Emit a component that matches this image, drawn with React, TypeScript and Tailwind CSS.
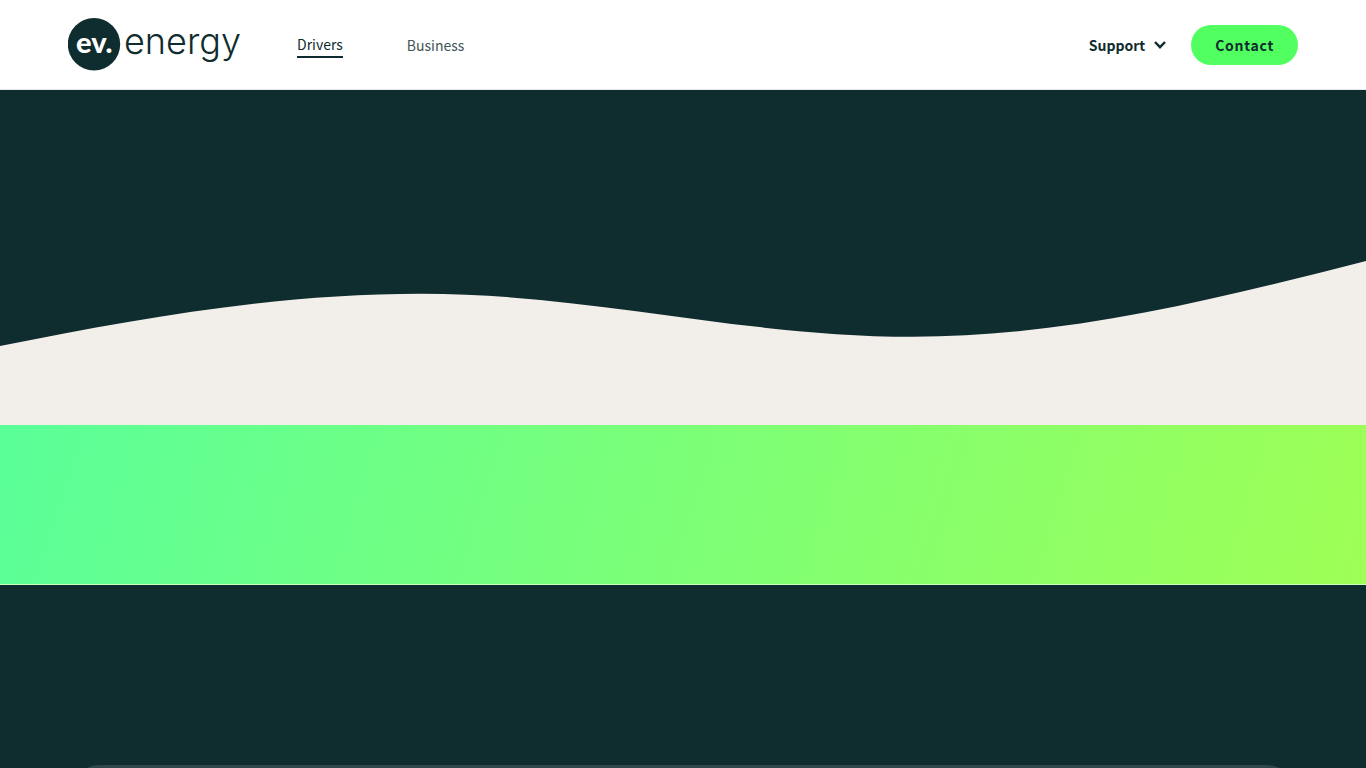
const navLinks = [
  { label: "Drivers", href: "#drivers", active: true },
  { label: "Business", href: "#business", active: false },
];

function Logo() {
  return (
    <a href="#home" aria-label="ev.energy" className="block">
      <svg className="block w-[180px] h-16" viewBox="0 -5 180 64" fill="#0f2c2e">
        <circle cx="26" cy="26.3" r="26.2" />
        <text x="8" y="35" fontFamily="Lato, sans-serif" fontSize="29" fontWeight="900" fill="#ffffff">
          ev.
        </text>
        <text x="56" y="36" fontFamily="Inter, sans-serif" fontSize="36" fontWeight="300">
          energy
        </text>
      </svg>
    </a>
  );
}

function Header() {
  return (
    <header className="h-[90px] px-[68px] flex items-center justify-between bg-white border-b border-gray-200">
      <div className="flex items-center">
        <Logo />
        <nav className="ml-[49px] flex items-center gap-16">
          {navLinks.map((link) => (
            <a
              key={link.label}
              href={link.href}
              className={
                link.active
                  ? "text-sm leading-6 border-b-2 border-[#0f2c2e]"
                  : "text-sm leading-6 text-[#3f5557]"
              }
            >
              {link.label}
            </a>
          ))}
        </nav>
      </div>

      <div className="flex items-center gap-6">
        <button type="button" className="flex items-center gap-2 text-sm font-bold">
          Support
          <svg className="w-3.5 h-2.5" viewBox="0 0 14 10" fill="none" stroke="currentColor" strokeWidth="2.4">
            <path d="M2 2 7 7.2 12 2" />
          </svg>
        </button>
        <a
          href="#contact"
          className="h-10 px-6 flex items-center rounded-full bg-[#52ff60] text-sm font-bold tracking-wider"
        >
          Contact
        </a>
      </div>
    </header>
  );
}

export default function App() {
  return (
    <div className="w-full overflow-hidden bg-white text-[#0f2c2e] font-['Noto_Sans_CJK_SC','Noto_Sans',sans-serif]">
      <Header />

      <main>
        {/* Hero with the wave along its lower edge */}
        <section className="h-[335px] flex items-end bg-[#0f2c2e]">
          <svg className="block w-full h-[165px]" viewBox="0 0 1366 165" preserveAspectRatio="none" fill="#f2eeea">
            <path d="M0 86C140 58 276 33.7 421 33.7C592 33.7 739 76.7 913 76.7C1068 76.7 1216 39 1366 1V165H0Z" />
          </svg>
        </section>

        <section className="h-40 border-b border-[#c8ffb8] bg-[linear-gradient(107deg,#5aff99_0%,#9eff55_100%)]" />

        {/* Card section */}
        <section className="px-[68px] pt-[180px] pb-20 bg-[#0f2c2e]">
          <div className="h-80 rounded-[32px] bg-[#2f474b] shadow-xl" />
        </section>
      </main>
    </div>
  );
}
